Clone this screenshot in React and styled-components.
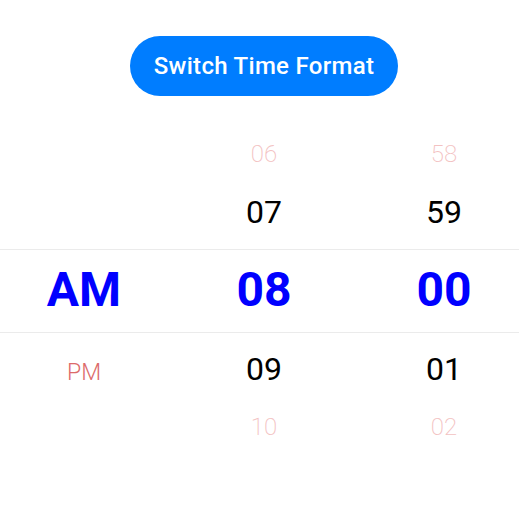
import React from "react";
import styled, { createGlobalStyle } from "styled-components";

const Global = createGlobalStyle`
  html, body { margin: 0; padding: 0; background: #fff; overflow: hidden; }
  body { font-family: Roboto, "Noto Sans", "Liberation Sans", sans-serif; }
`;

const Page = styled.div`
  width: 528px;
  height: 531px;
  display: flex;
  flex-direction: column;
  align-items: center;
  padding-top: 36px;
  box-sizing: border-box;
`;

const Button = styled.button`
  width: 268px;
  height: 60px;
  border: none;
  border-radius: 30px;
  background: #007dff;
  color: #fff;
  font-family: Roboto, "Noto Sans", sans-serif;
  font-size: 24px;
  font-weight: 500;
  letter-spacing: 0.3px;
  padding: 0;
`;

const Picker = styled.div`
  position: relative;
  width: 528px;
  margin-top: 29px;
`;

const Columns = styled.div`
  display: flex;
  justify-content: center;
`;

const Column = styled.div`
  width: 180px;
  flex: none;
  display: flex;
  flex-direction: column;
`;

const Cell = styled.div`
  height: ${(p) => (p.$selected ? 99 : 58)}px;
  display: flex;
  align-items: center;
  justify-content: center;
  padding-bottom: ${(p) => (p.$selected ? 2 : 1)}px;
  box-sizing: border-box;
  white-space: nowrap;
`;

const Label = styled.span`
  font-size: ${(p) => ({ far: 24, near: 32, sel: 48, faint: 23 }[p.$kind])}px;
  font-weight: ${(p) => ({ far: 200, near: 400, sel: 700, faint: 300 }[p.$kind])};
  color: ${(p) =>
    ({ far: "#f3c2c2", near: "#000", sel: "#0000ff", faint: "#dc6a6a" }[p.$kind])};
  line-height: 1;
  margin-top: ${(p) => (p.$kind === "faint" ? 8 : 0)}px;
`;

const Divider = styled.div`
  position: absolute;
  left: 0;
  right: 0;
  top: ${(p) => p.$top}px;
  border-top: 1px solid #ebebeb;
`;

const columns = [
  [null, null, { t: "AM", k: "sel" }, { t: "PM", k: "faint" }, null],
  [
    { t: "06", k: "far" },
    { t: "07", k: "near" },
    { t: "08", k: "sel" },
    { t: "09", k: "near" },
    { t: "10", k: "far" },
  ],
  [
    { t: "58", k: "far" },
    { t: "59", k: "near" },
    { t: "00", k: "sel" },
    { t: "01", k: "near" },
    { t: "02", k: "far" },
  ],
];

export default function App() {
  return (
    <>
      <Global />
      <Page>
        <Button>Switch Time Format</Button>
        <Picker>
          <Columns>
            {columns.map((col, ci) => (
              <Column key={ci}>
                {col.map((item, i) => (
                  <Cell key={i} $selected={i === 2}>
                    {item && <Label $kind={item.k}>{item.t}</Label>}
                  </Cell>
                ))}
              </Column>
            ))}
          </Columns>
          <Divider $top={124} />
          <Divider $top={207} />
        </Picker>
      </Page>
    </>
  );
}
